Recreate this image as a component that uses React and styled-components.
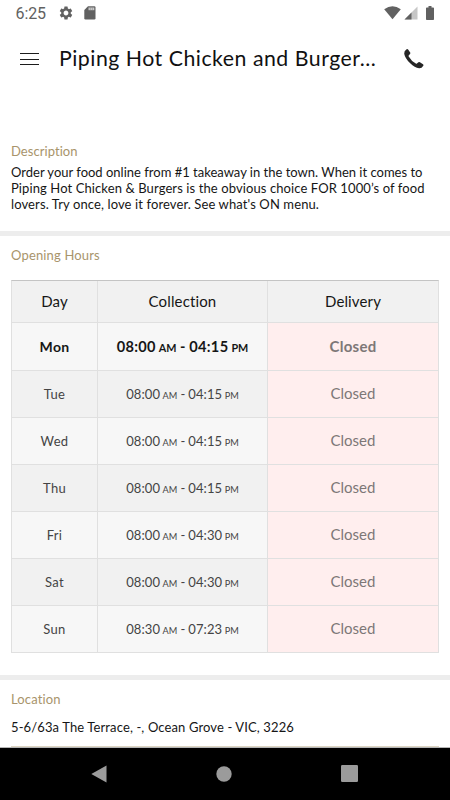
import React from "react";
import styled, { createGlobalStyle, css } from "styled-components";
import { MdSettings } from "react-icons/md";

const GlobalStyle = createGlobalStyle`
  * {
    box-sizing: border-box;
  }
  body {
    margin: 0;
    background: #fff;
    font-family: Lato, "Liberation Sans", sans-serif;
  }
`;

const Screen = styled.div`
  width: 450px;
  height: 800px;
  display: flex;
  flex-direction: column;
  overflow: hidden;
  background: #fff;
  color: #161616;
`;

// status bar
const StatusBar = styled.div`
  height: 28px;
  flex-shrink: 0;
  display: flex;
  align-items: center;
  padding: 0 16px 2px 15.5px;
  color: #616161;
  svg {
    display: block;
  }
`;
const Clock = styled.span`
  width: 42px;
  padding-top: 2px;
  font-family: Roboto, sans-serif;
  font-size: 16px;
  line-height: 26px;
  letter-spacing: -0.1px;
`;
const StatusIcons = styled.div`
  display: flex;
  align-items: center;
  gap: ${({ $gap }) => $gap}px;
  margin-left: ${({ $right }) => ($right ? "auto" : "0")};
`;
const Battery = styled.svg`
  margin-left: 5px;
`;

// app bar
const AppBar = styled.header`
  height: 62px;
  flex-shrink: 0;
  display: flex;
  align-items: center;
  padding: 0 25px 0 20px;
`;
const MenuButton = styled.button`
  width: 19px;
  height: 12px;
  padding: 0;
  margin-right: 20px;
  border: 0;
  background: none;
  display: flex;
  flex-direction: column;
  justify-content: space-between;
`;
const MenuLine = styled.span`
  height: 1px;
  width: 100%;
  background: #1c1c1c;
`;
const Title = styled.h1`
  flex: 1;
  margin: 0;
  padding-bottom: 2px;
  font-size: 21.3px;
  font-weight: 400;
  line-height: 28px;
  letter-spacing: 0.5px;
  white-space: nowrap;
  color: #111;
`;
const CallButton = styled.button`
  padding: 0;
  border: 0;
  background: none;
  color: #262626;
  svg {
    display: block;
  }
`;

// page sections
const Section = styled.section`
  padding: ${({ $pad }) => $pad};
`;
const Divider = styled.div`
  height: 5px;
  flex-shrink: 0;
  background: #ededed;
`;
const SectionTitle = styled.h2`
  margin: 0;
  font-size: 13px;
  font-weight: 400;
  line-height: 16px;
  letter-spacing: ${({ $spacing }) => $spacing}px;
  color: #a8946b;
`;
const TextLine = styled.span`
  display: block;
  font-size: 13px;
  line-height: inherit;
  letter-spacing: ${({ $spacing }) => $spacing}px;
  white-space: nowrap;
`;
const Description = styled.p`
  margin: 5px 0 0;
  line-height: 16px;
`;
const Address = styled.p`
  margin: 12px 0 0;
  height: 28px;
  line-height: 16px;
  border-bottom: 1px solid #ddd5c3;
`;

// opening hours
const Hours = styled.div`
  margin-top: 17px;
  border: solid #e0e0e0;
  border-width: 0 1px;
  border-top: 1px solid #c4c4c4;
`;
const HoursRow = styled.div`
  display: grid;
  grid-template-columns: 85px 170px 1fr;
  height: ${({ $height }) => $height}px;
  border-bottom: 1px solid #e0e0e0;
  background: ${({ $odd }) => ($odd ? "#f7f7f7" : "#f1f1f1")};
  color: #444;
  font-size: 13px;
  letter-spacing: 0.3px;
  ${({ $head }) =>
    $head &&
    css`
      color: #161616;
      font-size: 15px;
      letter-spacing: 0.14px;
    `}
  ${({ $today }) =>
    $today &&
    css`
      color: #161616;
      font-size: 14px;
      font-weight: 700;
    `}
`;
const Cell = styled.div`
  display: flex;
  align-items: center;
  justify-content: center;
  padding-bottom: 1px;
  white-space: pre;
  & + & {
    border-left: 1px solid #e0e0e0;
  }
`;
const HeadCell = styled(Cell)`
  padding-bottom: 2px;
`;
const ClosedCell = styled(Cell)`
  padding-bottom: 2px;
  background: #ffeeee;
  color: #7d7777;
  font-size: 15px;
  letter-spacing: ${({ $today }) => ($today ? 0.3 : 0)}px;
`;
const Time = styled.span`
  display: flex;
  align-items: baseline;
  font-size: ${({ $today }) => ($today ? 14.6 : 13)}px;
  letter-spacing: ${({ $today }) => ($today ? 0.3 : 0.1)}px;
`;
const Meridiem = styled.small`
  margin-left: ${({ $today }) => ($today ? 3 : 2.5)}px;
  font-size: ${({ $today }) => ($today ? 10.8 : 9.2)}px;
  letter-spacing: 0;
`;
const Dash = styled.span`
  margin: 0 ${({ $today }) => ($today ? 3.5 : 3)}px;
`;

// android navigation
const NavBar = styled.nav`
  height: 53px;
  flex-shrink: 0;
  margin-top: auto;
  display: flex;
  align-items: center;
  justify-content: space-between;
  padding: 0 92px 1px 91px;
  border-top: 1px solid #b5b5b5;
  background: #000;
`;

const days = [
  { day: "Mon", from: "08:00", to: "04:15", today: true },
  { day: "Tue", from: "08:00", to: "04:15" },
  { day: "Wed", from: "08:00", to: "04:15" },
  { day: "Thu", from: "08:00", to: "04:15" },
  { day: "Fri", from: "08:00", to: "04:30" },
  { day: "Sat", from: "08:00", to: "04:30" },
  { day: "Sun", from: "08:30", to: "07:23" },
];

const SdCardIcon = () => (
  <svg width="12" height="14" viewBox="0 0 12 14">
    <path d="M4 0.3H10.3Q11.5 0.3 11.5 1.5V12.3Q11.5 13.5 10.3 13.5H1.5Q0.3 13.5 0.3 12.3V4Z" fill="currentColor" />
    <path d="M4.5 1.5H10.3V4.2H4.5Z" fill="#c9c9c9" />
    <path d="M6.3 1.5V4.2M8.4 1.5V4.2" stroke="#858585" strokeWidth="0.5" />
  </svg>
);

const SignalIcon = () => (
  <svg width="14" height="14" viewBox="0 0 14 14">
    <path d="M13.5 0.5V13.5H0.5Z" fill="#c6c6c6" />
    <path d="M7.5 6.5V13.5H0.5Z" fill="currentColor" />
  </svg>
);

const WifiIcon = () => (
  <svg width="17" height="14" viewBox="0 0 17 14">
    <path d="M0.2 3.3Q8.5 -2.7 16.8 3.3L8.5 13.3Z" fill="currentColor" />
  </svg>
);

const BatteryIcon = () => (
  <Battery width="8" height="14" viewBox="0 0 8 14">
    <path
      d="M2.5 0H5.5V1.4H7.2Q8 1.4 8 2.2V13.2Q8 14 7.2 14H0.8Q0 14 0 13.2V2.2Q0 1.4 0.8 1.4H2.5Z"
      fill="currentColor"
    />
  </Battery>
);

const PhoneIcon = () => (
  <svg width="22" height="22" viewBox="0 0 22 22" fill="currentColor">
    <path d="M3.6 1.3Q4.4 0.7 5.1 1.5L7.2 4.5Q7.7 5.3 7 6L5.7 7.4Q5.3 7.9 5.7 8.6Q8.3 13.2 12.8 15.5Q13.4 15.8 13.9 15.4L15.4 14.2Q16.1 13.7 16.9 14.2L20 16.3Q20.9 17 20.3 17.8Q18.7 20.5 16.1 20.3Q11.7 19.7 7.2 15.3Q2.1 10.4 1.2 5.7Q0.9 3 3.6 1.3Z" />
  </svg>
);

const HoursItem = ({ item }) => {
  const { day, from, to, today } = item;
  return (
    <>
      <Cell>{day}</Cell>
      <Cell>
        <Time $today={today}>
          {from}
          <Meridiem $today={today}>AM</Meridiem>
          <Dash $today={today}>-</Dash>
          {to}
          <Meridiem $today={today}>PM</Meridiem>
        </Time>
      </Cell>
      <ClosedCell $today={today}>Closed</ClosedCell>
    </>
  );
};

const App = () => {
  return (
    <Screen>
      <GlobalStyle />
      <StatusBar>
        <Clock>6:25</Clock>
        <StatusIcons $gap={10}>
          <MdSettings size={16} />
          <SdCardIcon />
        </StatusIcons>
        <StatusIcons $gap={3} $right>
          <WifiIcon />
          <SignalIcon />
          <BatteryIcon />
        </StatusIcons>
      </StatusBar>

      <AppBar>
        <MenuButton aria-label="Menu">
          <MenuLine />
          <MenuLine />
          <MenuLine />
        </MenuButton>
        <Title>Piping Hot Chicken and Burger...</Title>
        <CallButton aria-label="Call">
          <PhoneIcon />
        </CallButton>
      </AppBar>

      <Section $pad="53px 11px 19px">
        <SectionTitle $spacing={0.06}>Description</SectionTitle>
        <Description>
          <TextLine $spacing={0}>
            Order your food online from #1 takeaway in the town. When it comes to
          </TextLine>
          <TextLine $spacing={0.1}>
            Piping Hot Chicken &amp; Burgers is the obvious choice FOR 1000’s of food
          </TextLine>
          <TextLine $spacing={0.11}>
            lovers. Try once, love it forever. See what's ON menu.
          </TextLine>
        </Description>
      </Section>
      <Divider />

      <Section $pad="11px 11px 22px">
        <SectionTitle $spacing={0.16}>Opening Hours</SectionTitle>
        <Hours>
          <HoursRow $head $height={42}>
            <HeadCell>Day</HeadCell>
            <HeadCell>Collection</HeadCell>
            <HeadCell>Delivery</HeadCell>
          </HoursRow>
          {days.map((item, i) => (
            <HoursRow
              key={item.day}
              $odd={i % 2 === 0}
              $today={item.today}
              $height={item.today ? 48 : 47}
            >
              <HoursItem item={item} />
            </HoursRow>
          ))}
        </Hours>
      </Section>
      <Divider />

      <Section $pad="11px 11px 0">
        <SectionTitle $spacing={0.12}>Location</SectionTitle>
        <Address>
          <TextLine $spacing={0.12}>
            5-6/63a The Terrace, -, Ocean Grove - VIC, 3226
          </TextLine>
        </Address>
      </Section>

      <NavBar>
        <svg width="16" height="18" viewBox="0 0 16 18">
          <path d="M15.5 0.5V17.5L0.3 9Z" fill="#9b9b9b" />
        </svg>
        <svg width="16" height="16" viewBox="0 0 16 16">
          <circle cx="8" cy="8" r="7.7" fill="#9b9b9b" />
        </svg>
        <svg width="17" height="17" viewBox="0 0 17 17">
          <rect width="17" height="17" rx="1.2" fill="#9b9b9b" />
        </svg>
      </NavBar>
    </Screen>
  );
};

export default App;
